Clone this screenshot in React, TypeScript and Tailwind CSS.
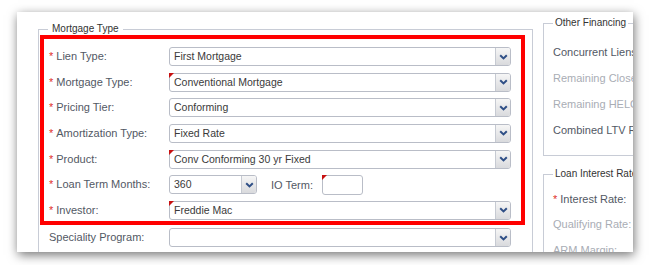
import React from "react";

const font = { fontFamily: '"Liberation Sans", Arial, sans-serif' };

function Chevron() {
  return (
    <svg width="9" height="6" viewBox="0 0 9 6">
      <path d="M1.2 1.2 L4.5 4.4 L7.8 1.2" fill="none" stroke="#2f4f86" strokeWidth="2" />
    </svg>
  );
}

function Corner() {
  return (
    <span className="absolute left-[-1px] top-[-1px] h-0 w-0 border-t-[5px] border-r-[5px] border-t-[#c81010] border-r-transparent" />
  );
}

function Select({ value, flag, className }: { value: string; flag?: boolean; className?: string }) {
  return (
    <div
      className={`relative flex h-[19px] items-center rounded-[3px] border border-[#b9bdc7] bg-white ${className ?? ""}`}
    >
      {flag && <Corner />}
      <span className="flex-1 truncate pl-[4px] text-[10.5px] leading-[17px] text-[#3a3a3a]">{value}</span>
      <div className="flex h-full w-[15px] items-center justify-center rounded-r-[2px] border-l border-[#c6cad2] bg-gradient-to-b from-[#f6f6f6] to-[#d9dadd]">
        <Chevron />
      </div>
    </div>
  );
}

function Label({ text, req }: { text: string; req?: boolean }) {
  return (
    <div className="flex w-[120px] shrink-0 items-center text-[11px] leading-[13px] text-[#525864]">
      {req && <span className="mr-[3px] text-[#e0302a]">*</span>}
      <span>{text}</span>
    </div>
  );
}

function Row({ label, value, flag }: { label: string; value: string; flag?: boolean }) {
  return (
    <div className="flex h-[19px] items-center">
      <Label text={label} req />
      <Select value={value} flag={flag} className="w-[342px]" />
    </div>
  );
}

export default function App() {
  return (
    <div className="h-[265px] w-[651px] overflow-hidden bg-white pl-[17px] pt-[12px]" style={font}>
      <div className="flex h-[240px] w-[616px] overflow-hidden bg-white shadow-[1px_3px_10px_rgba(0,0,0,0.55)]">
        {/* Left column */}
        <div className="ml-[21px] mt-[11px] w-[495px] shrink-0">
          <fieldset className="h-[260px] border border-[#c8ccd6] pl-[1px] pr-[7px]">
            <legend className="ml-[8px] px-[4px] text-[10px] leading-[12px] text-[#333]">Mortgage Type</legend>
            <div className="box-border flex h-[190px] w-[485px] flex-col gap-[6.67px] border-4 border-[#ff0000] pl-[5px] pt-[8px]">
              <Row label="Lien Type:" value="First Mortgage" />
              <Row label="Mortgage Type:" value="Conventional Mortgage" flag />
              <Row label="Pricing Tier:" value="Conforming" />
              <Row label="Amortization Type:" value="Fixed Rate" />
              <Row label="Product:" value="Conv Conforming 30 yr Fixed" flag />
              <div className="flex h-[19px] items-center">
                <Label text="Loan Term Months:" req />
                <Select value="360" className="w-[88px]" />
                <span className="ml-[14px] text-[11px] text-[#525864]">IO Term:</span>
                <div className="relative ml-[9px] h-[20px] w-[41px] rounded-[3px] border border-[#b9bdc7] bg-white">
                  <Corner />
                </div>
              </div>
              <Row label="Investor:" value="Freddie Mac" flag />
            </div>
            <div className="mt-[3px] flex h-[19px] items-center pl-[9px]">
              <div className="w-[120px] shrink-0 text-[11px] leading-[13px] text-[#525864]">Speciality Program:</div>
              <Select value="" className="w-[342px]" />
            </div>
          </fieldset>
        </div>

        {/* Right column */}
        <div className="ml-[10px] mt-[5px] flex w-[140px] shrink-0 flex-col">
          <fieldset className="border border-[#c8ccd6] pb-[12px] pl-[9px]">
            <legend className="px-[2px] text-[10px] leading-[12px] text-[#333]">Other Financing</legend>
            <div className="flex flex-col whitespace-nowrap pt-[10px] text-[11px]">
              <div className="flex h-[26px] items-center text-[#525864]">Concurrent Liens Total:</div>
              <div className="flex h-[26px] items-center text-[#a9adb5]">Remaining Closed End:</div>
              <div className="flex h-[26px] items-center text-[#a9adb5]">Remaining HELOC:</div>
              <div className="flex h-[26px] items-center text-[#525864]">Combined LTV Ratio:</div>
            </div>
          </fieldset>
          <fieldset className="mt-[12px] h-[120px] border border-[#c8ccd6] pl-[9px]">
            <legend className="px-[2px] text-[10px] leading-[12px] text-[#333]">Loan Interest Rate</legend>
            <div className="flex flex-col whitespace-nowrap pt-[6px] text-[11px]">
              <div className="flex h-[25.67px] items-center text-[#525864]">
                <span className="mr-[3px] text-[#e0302a]">*</span>Interest Rate:
              </div>
              <div className="flex h-[25.67px] items-center text-[#a9adb5]">Qualifying Rate:</div>
              <div className="flex h-[25.67px] items-center text-[#a9adb5]">ARM Margin:</div>
            </div>
          </fieldset>
        </div>
      </div>
    </div>
  );
}
